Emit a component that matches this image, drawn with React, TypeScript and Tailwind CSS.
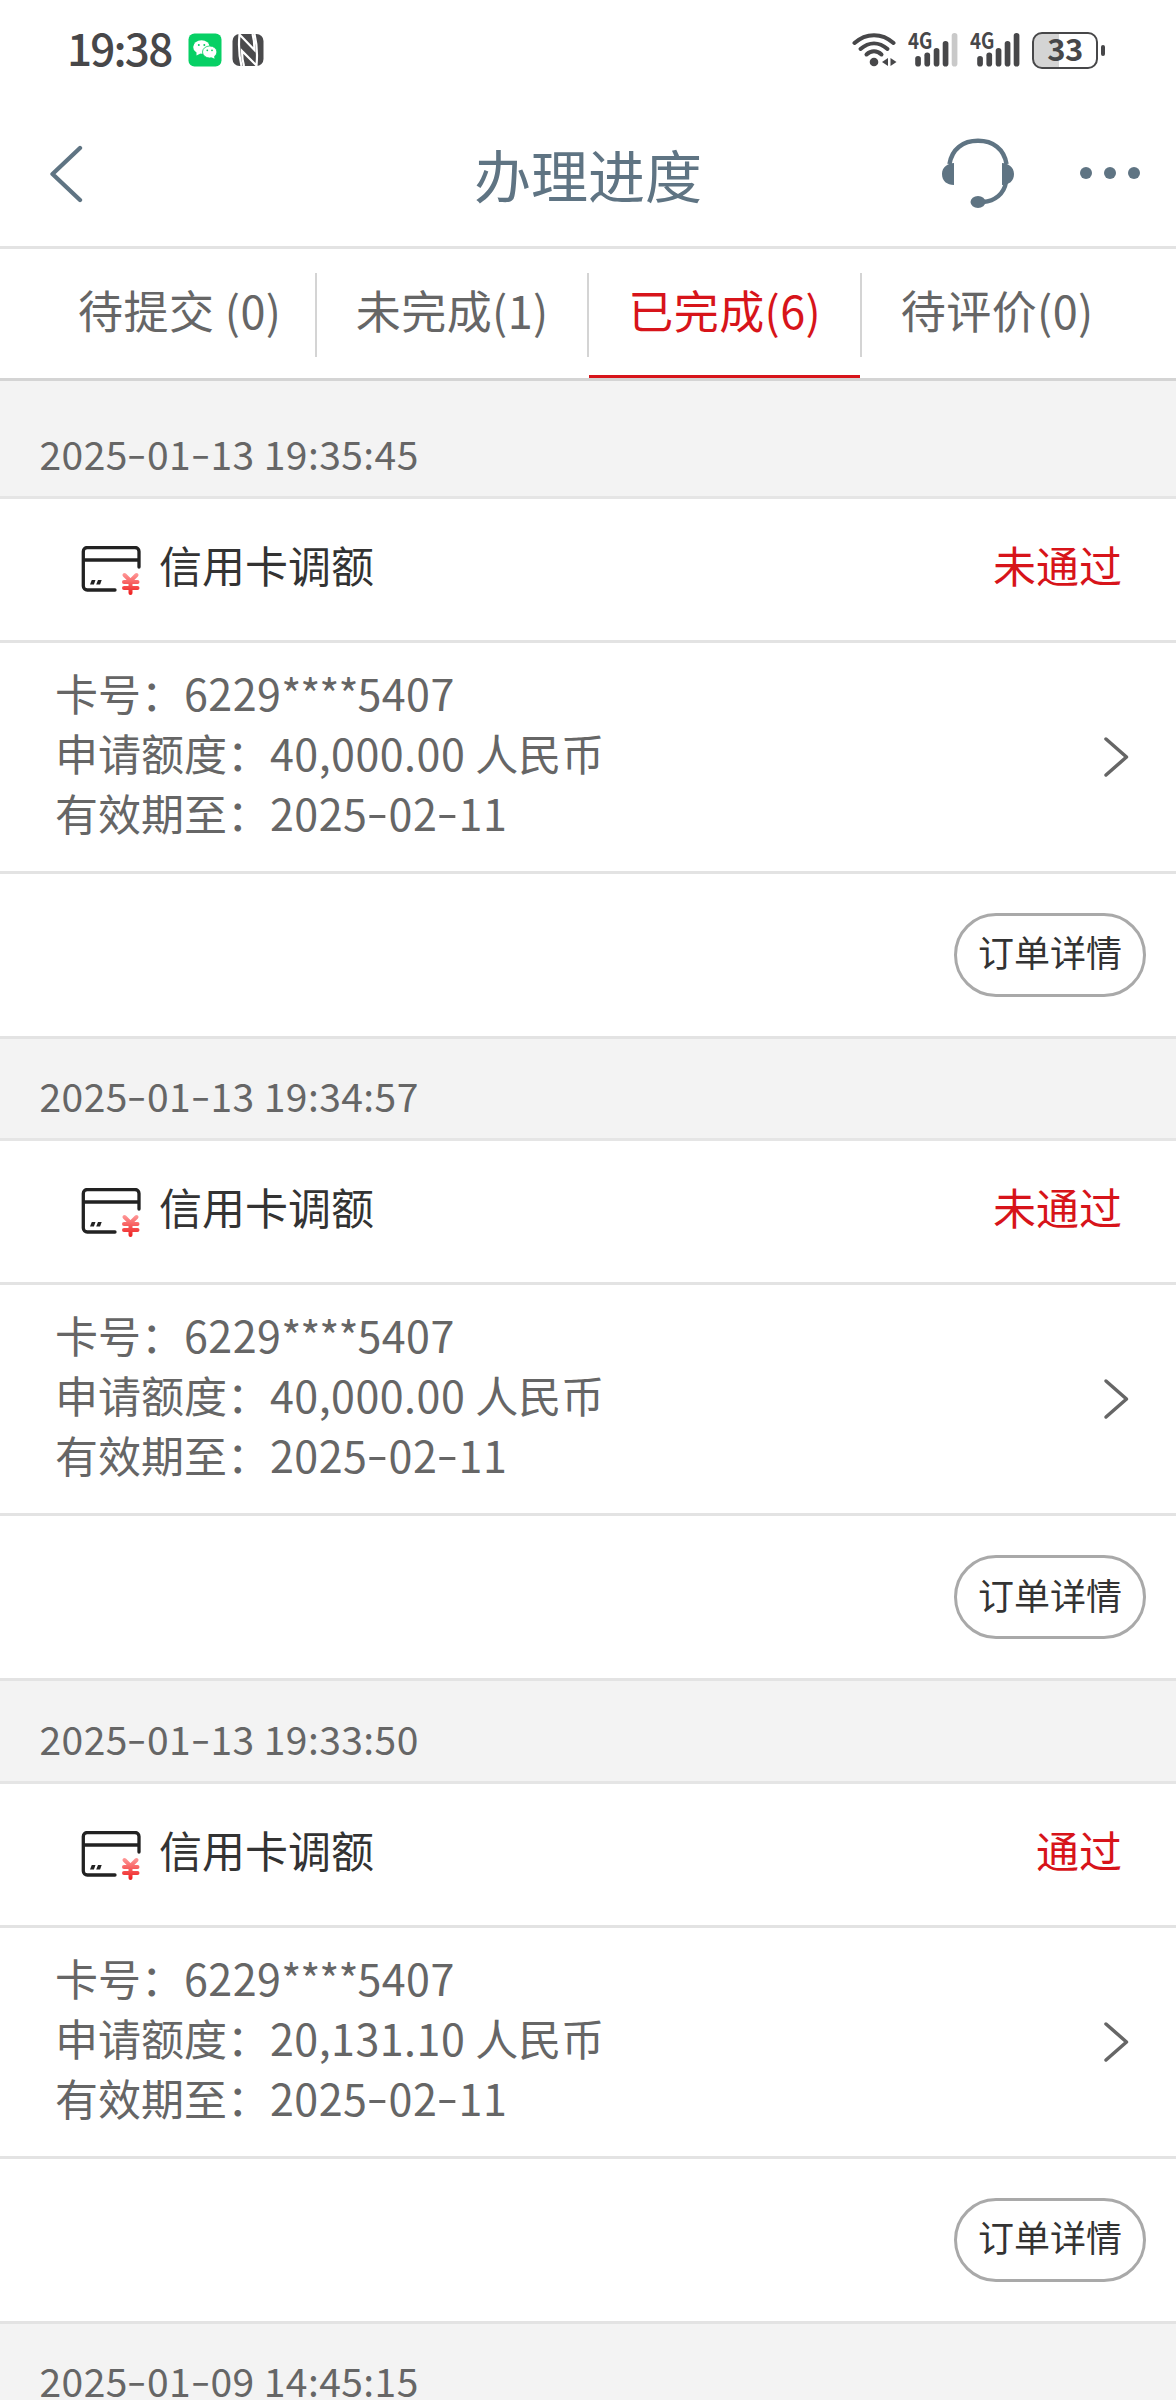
import { Fragment } from 'react'
import { clsx } from 'clsx'

interface Order {
  time: string
  status: string
  amount: string
}

const orders: Order[] = [
  { time: '2025-01-13 19:35:45', status: '未通过', amount: '40,000.00' },
  { time: '2025-01-13 19:34:57', status: '未通过', amount: '40,000.00' },
  { time: '2025-01-13 19:33:50', status: '通过', amount: '20,131.10' },
]

const tabs = [
  { label: '待提交 (0)', active: false },
  { label: '未完成(1)', active: false },
  { label: '已完成(6)', active: true },
  { label: '待评价(0)', active: false },
]

// digits with a wide hyphen and tight mask stars
function Num({ value }: { value: string }) {
  return (
    <span className="tracking-[0.011em]">
      {value.split(/(-|\*+)/).map((part, i) => {
        if (part === '-') {
          return (
            <span key={i} className="mx-[0.068em] inline-block -translate-y-[0.05em] scale-x-145">-</span>
          )
        }
        if (part.startsWith('*')) {
          return <span key={i} className="tracking-[-0.025em]">{part}</span>
        }
        return <Fragment key={i}>{part}</Fragment>
      })}
    </span>
  )
}

function WechatIcon() {
  return (
    <svg width="34" height="34" viewBox="0 0 34 34">
      <rect x="0.5" y="0.5" width="33" height="33" rx="6" fill="#07d065" />
      <ellipse cx="13.500" cy="14" rx="8.300" ry="6.800" fill="#fff" />
      <path d="M8.500 18.500l0 4 4-2z" fill="#fff" />
      <ellipse cx="21.700" cy="19" rx="7.200" ry="6" fill="#fff" stroke="#07d065" strokeWidth="0.800" />
      <path d="M23 24l3.500 1.800-.5-3z" fill="#fff" />
      <circle cx="10.800" cy="12" r="1" fill="#07d065" />
      <circle cx="16.300" cy="12" r="1" fill="#07d065" />
      <circle cx="19.300" cy="17.300" r="0.900" fill="#07d065" />
      <circle cx="24" cy="17.300" r="0.900" fill="#07d065" />
    </svg>
  )
}

function NfcIcon() {
  return (
    <svg width="32" height="34" viewBox="0 0 32 34">
      <rect x="0.5" y="1" width="31" height="32" rx="7" fill="#4a4a4c" />
      <path d="M9.500 33C7 23 6.500 12 7.500 1.500L22.500 17C22.500 10 22 6 20.500 1" fill="none" stroke="#fff" strokeWidth="2.200" />
      <path d="M22.500 1c2.500 10 3 21 2 31.500L10 18c0 6 .5 10 2 15" fill="none" stroke="#fff" strokeWidth="2.200" />
    </svg>
  )
}

function WifiIcon() {
  return (
    <svg width="46" height="36" viewBox="0 0 46 36" fill="none" stroke="#474749" strokeWidth="4" strokeLinecap="round">
      <path d="M2.500 11C14 0.500 30 0.500 41.500 11" />
      <path d="M8.500 17C17 9.500 27 9.500 35.500 17" />
      <path d="M14.500 22.500c4.500-4.300 10.500-4.300 15 0" />
      <circle cx="22" cy="30" r="4.300" fill="#474749" stroke="none" />
      <path d="M36 26v8l-6-4zM38.500 26v8l6-4z" fill="#474749" stroke="none" />
    </svg>
  )
}

function Signal({ weak = false }: { weak?: boolean }) {
  return (
    <div className="relative h-[36px] w-[52px]">
      <span className="absolute -top-[4px] left-0 origin-left scale-x-85 text-[22px] leading-[22px] font-bold text-[#474749]">4G</span>
      <svg width="52" height="36" viewBox="0 0 52 36" fill="#474749">
        <rect x="7.200" y="24" width="5.700" height="10.500" rx="2.800" />
        <rect x="16.400" y="20.500" width="5.700" height="14" rx="2.800" />
        <rect x="25.700" y="16" width="5.700" height="18.500" rx="2.800" />
        <rect x="34.700" y="9" width="5.700" height="25.500" rx="2.800" />
        <rect x="43.700" y="1" width="5.700" height="33.500" rx="2.800" fill={weak ? '#c9c9c9' : '#474749'} />
      </svg>
    </div>
  )
}

function Battery() {
  return (
    <div className="flex items-center gap-[3px]">
      <div className="flex h-[37px] w-[66px] items-center justify-center rounded-[10px] border-[2px] border-[#474749] bg-linear-to-r from-[#d4d4d4] from-40% to-white to-40% pb-[5px]">
        <span className="text-[31px] leading-none font-bold tracking-[-0.5px] text-[#474749]">33</span>
      </div>
      <div className="h-[11px] w-[4px] rounded-full bg-[#474749]" />
    </div>
  )
}

function StatusBar() {
  return (
    <div className="flex h-[100px] items-center justify-between pr-[71px] pl-[67px]">
      <div className="flex items-center">
        <span className="w-[121px] pb-[6px] text-[44px] leading-none font-medium tracking-[-1.8px] text-[#474749]">19:38</span>
        <WechatIcon />
        <div className="w-[10px]" />
        <NfcIcon />
      </div>
      <div className="flex items-center">
        <WifiIcon />
        <div className="w-[10px]" />
        <Signal weak />
        <div className="w-[10px]" />
        <Signal />
        <div className="w-[10px]" />
        <Battery />
      </div>
    </div>
  )
}

function NavBar() {
  return (
    <header className="grid h-[149px] grid-cols-[1fr_auto_1fr] items-center border-b-[3px] border-[#e3e3e3] text-[#5f7483]">
      <svg className="ml-[47.5px]" width="36" height="60" viewBox="0 0 36 60" fill="none" stroke="currentColor" strokeWidth="4.300" strokeLinecap="round" strokeLinejoin="round">
        <path d="M32 5L4.500 31L32 57" />
      </svg>
      <h1 className="text-[57px] leading-none">办理进度</h1>
      <div className="flex items-center justify-end pr-[36px]">
        <svg width="76" height="76" viewBox="0 0 76 76" fill="none" stroke="currentColor" strokeWidth="4.500">
          <path d="M9.500 29C12 14 23 5.800 38 5.800S64 14 66.500 29" />
          <path d="M66 47C64 59 55 66 43 67" />
          <path d="M14 28c-6 0-12 4-12 11s5 11 12 11zM62 28c6 0 12 4 12 11s-5 11-12 11z" fill="currentColor" stroke="none" />
          <ellipse cx="38" cy="67" rx="7.500" ry="6" fill="currentColor" stroke="none" />
        </svg>
        <div className="ml-[64px] flex gap-[12px]">
          <i className="size-[12px] rounded-full bg-current" />
          <i className="size-[12px] rounded-full bg-current" />
          <i className="size-[12px] rounded-full bg-current" />
        </div>
      </div>
    </header>
  )
}

function TabBar() {
  return (
    <nav className="flex h-[132px] border-b-[3px] border-[#d4d4d4] px-[44px]">
      {tabs.map((tab, i) => (
        <Fragment key={tab.label}>
          {i > 0 && <div className="mt-[24px] h-[84px] w-[2px] bg-[#d4d4d4]" />}
          <div
            className={clsx(
              'flex flex-1 items-center justify-center border-b-[3px] pb-[5px] pl-px text-[45px] tracking-[0.4px] whitespace-nowrap',
              tab.active ? 'border-[#d7141a] text-[#d7141a]' : 'border-transparent text-[#666]',
            )}
          >
            {tab.label}
          </div>
        </Fragment>
      ))}
    </nav>
  )
}

function CardIcon() {
  return (
    <svg className="mt-[3px]" width="60" height="50" viewBox="0 0 60 50" fill="none" stroke="#222" strokeWidth="3.300" strokeLinecap="round">
      <defs>
        <linearGradient id="yuan" x1="0" y1="27" x2="0" y2="49" gradientUnits="userSpaceOnUse">
          <stop offset="0" stopColor="#ff9a9a" />
          <stop offset="1" stopColor="#ee1c1c" />
        </linearGradient>
      </defs>
      <path d="M58 21V5.500a4 4 0 0 0-4-4H6.300a4 4 0 0 0-4 4v34.500a4 4 0 0 0 4 4H34" />
      <path d="M2.500 14h55" strokeLinecap="butt" />
      <path d="M10.800 34h3.700l-1.600 4.500H9zM17 34h3.700l-1.600 4.500h-3.900z" fill="#222" stroke="none" />
      <path d="M43.500 29l6 6L55.500 29M43 36h13.500M43 42h13.500M49.500 35.500V47" stroke="url(#yuan)" strokeWidth="4" />
    </svg>
  )
}

function DateBand({ time }: { time: string }) {
  return (
    <div className="flex h-[102.5px] items-center border-b-[3px] border-[#e5e5e5] bg-[#f3f3f3] pt-[15px] pl-[39.5px] text-[39px] leading-none text-[#666]">
      <Num value={time} />
    </div>
  )
}

function OrderCard({ order }: { order: Order }) {
  return (
    <section>
      <DateBand time={order.time} />
      <div className="flex h-[144px] items-center border-b-[3px] border-[#e3e3e3] pr-[54px] pl-[81px] text-[43px]">
        <CardIcon />
        <span className="mb-[10px] ml-[18px] text-[#333]">信用卡调额</span>
        <span className="mb-[10px] ml-auto text-[#d7141a]">{order.status}</span>
      </div>
      <div className="flex h-[231px] items-center justify-between border-b-[3px] border-[#e3e3e3] pr-[47px] pl-[55px] text-[43px] leading-[60px] text-[#666]">
        <div className="pb-[10px]">
          <p>卡号：<Num value="6229****5407" /></p>
          <p>申请额度：<Num value={`${order.amount} `} />人民币</p>
          <p>有效期至：<Num value="2025-02-11" /></p>
        </div>
        <svg width="26" height="42" viewBox="0 0 26 42" fill="none" stroke="#666" strokeWidth="3.500" strokeLinecap="round" strokeLinejoin="round">
          <path d="M3 3L23.500 21L3 39" />
        </svg>
      </div>
      <div className="flex h-[165px] items-center justify-end border-b-[3px] border-[#e3e3e3] pr-[30px]">
        <button className="h-[84px] w-[192px] rounded-full border-[3px] border-[#a9a9a9] pb-[7px] text-[36px] leading-none text-[#333]">订单详情</button>
      </div>
    </section>
  )
}

export default function App() {
  return (
    <main className="h-[2400px] w-[1176px] overflow-hidden bg-white font-['Noto_Sans_CJK_SC',sans-serif]">
      <StatusBar />
      <NavBar />
      <TabBar />
      <div className="h-[15px] bg-[#f3f3f3]" />
      {orders.map((order) => (
        <OrderCard key={order.time} order={order} />
      ))}
      <DateBand time="2025-01-09 14:45:15" />
    </main>
  )
}
